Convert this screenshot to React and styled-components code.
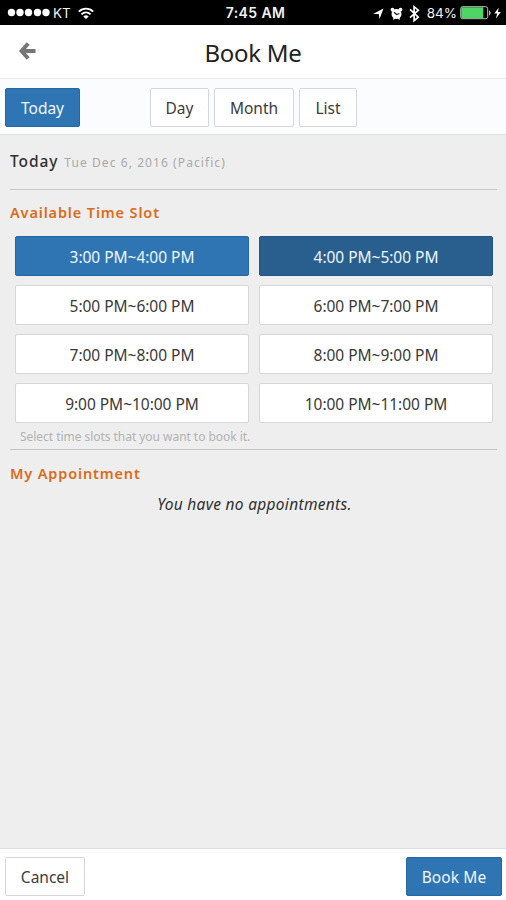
import React from "react";
import styled, { createGlobalStyle } from "styled-components";

const GlobalStyle = createGlobalStyle`
  * { box-sizing: border-box; }
  body { margin: 0; background: #eee; font-family: "Noto Sans", "Open Sans", sans-serif; }
  button { font-family: inherit; margin: 0; }
`;

const Screen = styled.div`
  width: 506px;
  height: 900px;
  display: flex;
  flex-direction: column;
  overflow: hidden;
  background: #eee;
  color: #333;
`;

const StatusBar = styled.div`
  height: 25px;
  flex: none;
  display: grid;
  grid-template-columns: 1fr auto 1fr;
  align-items: center;
  padding: 1px 4px 0 7px;
  background: #000;
  color: #f2f2f2;
  font: 500 13px/20px Inter, "Liberation Sans", sans-serif;
`;

const StatusGroup = styled.div`
  display: flex;
  align-items: center;
  justify-content: ${(p) => (p.$end ? "flex-end" : "flex-start")};
  svg { display: block; flex: none; }
`;

const Carrier = styled.span`
  margin: 0 7px 0 3px;
  font-size: 13.5px;
  font-weight: 400;
`;

const Clock = styled.span`
  font-size: 14px;
  font-weight: 600;
  letter-spacing: 0.4px;
  padding-left: 2px;
`;

const Percent = styled.span`
  margin: 0 3px 0 5px;
  font-size: 13.5px;
  font-weight: 400;
`;

const Header = styled.header`
  height: 54px;
  flex: none;
  display: grid;
  grid-template-columns: 60px 1fr 60px;
  align-items: center;
  background: #fff;
  border-bottom: 1px solid #e7e9ea;
`;

const BackButton = styled.button`
  border: 0;
  padding: 0 0 1px 18px;
  background: none;
  svg { display: block; }
`;

const Title = styled.h1`
  margin: 2px 0 0;
  text-align: center;
  font-size: 24px;
  line-height: 34px;
  font-weight: 400;
  letter-spacing: -0.3px;
  color: #222;
`;

const Toolbar = styled.nav`
  height: 56px;
  flex: none;
  display: grid;
  grid-template-columns: 145px auto 1fr;
  align-items: center;
  padding: 2px 5px 0;
  background: #fafcfe;
  border-bottom: 1px solid #dfe0e2;
`;

const ViewSwitch = styled.div`
  display: flex;
  gap: 5px;
`;

const Button = styled.button`
  width: ${(p) => p.$width}px;
  height: 39px;
  padding: 1px 0 0;
  border: 1px solid ${(p) => (p.$primary ? "#2468a2" : "#d5d6d9")};
  border-radius: 2px;
  background: ${(p) => (p.$primary ? "#2f75b3" : "#fff")};
  color: ${(p) => (p.$primary ? "#f1f7fb" : "#3c3c3c")};
  font-size: 15.5px;
  line-height: 24px;
  letter-spacing: ${(p) => p.$spacing || 0}px;
`;

const Content = styled.main`
  flex: 1;
  padding: 0 9px 0 10px;
`;

const DateRow = styled.div`
  height: 55px;
  display: flex;
  align-items: baseline;
  padding-top: 14px;
  border-bottom: 1px solid #c9c9c9;
  line-height: 24px;
`;

const DayName = styled.span`
  font-size: 15.5px;
  font-weight: 500;
  letter-spacing: 0.9px;
  color: #303030;
`;

const FullDate = styled.span`
  margin-left: 6px;
  font-size: 12px;
  letter-spacing: 1.08px;
  color: #a9a9a9;
`;

const SectionTitle = styled.h2`
  margin: 0;
  padding-top: ${(p) => p.$top}px;
  font-size: 14.5px;
  line-height: 22px;
  font-weight: 600;
  letter-spacing: ${(p) => p.$spacing}px;
  color: #dc6b18;
`;

const SlotGrid = styled.div`
  display: grid;
  grid-template-columns: 1fr 1fr;
  gap: 9px 10px;
  margin: 13px 4px 0 5px;
`;

const tones = {
  primary: ["#2f75b3", "#2468a2", "#eff6fb"],
  active: ["#285f8f", "#205484", "#eff6fb"],
  plain: ["#fff", "#d7d7d7", "#393939"],
};

const Slot = styled.button`
  height: 40px;
  padding: 1px 0 0;
  border: 1px solid ${(p) => tones[p.$tone][1]};
  border-radius: 2px;
  background: ${(p) => tones[p.$tone][0]};
  color: ${(p) => tones[p.$tone][2]};
  font-size: 15.5px;
  line-height: 24px;
  letter-spacing: -0.03px;
`;

const Hint = styled.p`
  height: 27px;
  margin: 0;
  padding: 4px 0 0 10px;
  border-bottom: 1px solid #c5c5c5;
  font-size: 12px;
  line-height: 20px;
  letter-spacing: -0.04px;
  color: #b2b2b2;
`;

const Empty = styled.p`
  margin: 8px 0 0;
  padding-left: 2px;
  text-align: center;
  font-size: 15.5px;
  line-height: 24px;
  font-style: italic;
  letter-spacing: 0.3px;
  color: #303030;
`;

const Footer = styled.footer`
  height: 52px;
  flex: none;
  display: flex;
  justify-content: space-between;
  align-items: flex-start;
  padding: 8px 4px 0 5px;
  background: #fff;
  border-top: 1px solid #dfdfdf;
`;

const SignalDots = () => (
  <svg width="43" height="12" viewBox="0 0 43 12" fill="#fff">
    {[4.5, 13, 21.5, 30.5, 39].map((x) => (
      <circle key={x} cx={x} cy="5.5" r="3.7" />
    ))}
  </svg>
);

const WifiIcon = () => (
  <svg width="16" height="13" viewBox="0 0 16 13" fill="none" stroke="#fff" strokeWidth="1.9">
    <path d="M.8 4.6C5 .6 11 .6 15.2 4.6M3.4 7.4c2.7-2.5 6.5-2.5 9.2 0" />
    <path d="M5.3 9.4c1.6-1.5 3.8-1.5 5.4 0L8 12z" fill="#fff" stroke="none" />
  </svg>
);

const StatusIcons = () => (
  <svg width="50" height="20" viewBox="0 0 50 20">
    <path d="M1 11 11.5 5.5 7.5 16 6.8 11z" fill="#fff" />
    <g fill="#fff">
      <circle cx="24.5" cy="11" r="5" />
      <circle cx="20.5" cy="6.7" r="1.9" />
      <circle cx="28.5" cy="6.7" r="1.9" />
      <path d="m20.7 16 2-2h3.6l2 2-1 .8-2.3-1.8h-1l-2.3 1.8z" />
    </g>
    <path d="m22 9.2 2.6 2.3 2.8-1" fill="none" stroke="#222" strokeWidth="1.2" />
    <path d="m38 6.3 8.3 7.8-4.2 3.6V3.7l4.2 3.5L38 14.6" fill="none" stroke="#fff" strokeWidth="1.7" />
  </svg>
);

const BatteryIcon = () => (
  <svg width="42" height="14" viewBox="0 0 42 14">
    <rect x=".7" y=".7" width="27" height="12" rx="2" fill="none" stroke="#b7c4b8" />
    <path d="M1.3 1.3h22v10.8h-22z" fill="#4fd466" />
    <path d="M29.2 4.5c1.8.6 1.8 4.4 0 5z" fill="#ddd" />
    <path d="m38.8 1.5-4.4 6h2.8l-1.3 5 5-6.4h-3z" fill="#fff" />
  </svg>
);

const ArrowIcon = () => (
  <svg width="18" height="20" viewBox="0 0 18 20" fill="none" stroke="#777" strokeWidth="4">
    <path d="M10.2 2.5 3.6 10l6.6 7.5M4 10H17.5" />
  </svg>
);

const slots = [
  ["3:00 PM~4:00 PM", "primary"],
  ["4:00 PM~5:00 PM", "active"],
  ["5:00 PM~6:00 PM", "plain"],
  ["6:00 PM~7:00 PM", "plain"],
  ["7:00 PM~8:00 PM", "plain"],
  ["8:00 PM~9:00 PM", "plain"],
  ["9:00 PM~10:00 PM", "plain"],
  ["10:00 PM~11:00 PM", "plain"],
];

export default function App() {
  return (
    <Screen>
      <GlobalStyle />
      <StatusBar>
        <StatusGroup>
          <SignalDots />
          <Carrier>KT</Carrier>
          <WifiIcon />
        </StatusGroup>
        <Clock>7:45 AM</Clock>
        <StatusGroup $end>
          <StatusIcons />
          <Percent>84%</Percent>
          <BatteryIcon />
        </StatusGroup>
      </StatusBar>
      <Header>
        <BackButton aria-label="Back"><ArrowIcon /></BackButton>
        <Title>Book Me</Title>
      </Header>
      <Toolbar>
        <Button $primary $width={75}>Today</Button>
        <ViewSwitch>
          <Button $width={59}>Day</Button>
          <Button $width={80}>Month</Button>
          <Button $width={58}>List</Button>
        </ViewSwitch>
      </Toolbar>
      <Content>
        <DateRow>
          <DayName>Today</DayName>
          <FullDate>Tue Dec 6, 2016 (Pacific)</FullDate>
        </DateRow>
        <SectionTitle $top={11} $spacing={0.85}>Available Time Slot</SectionTitle>
        <SlotGrid>
          {slots.map(([label, tone]) => (
            <Slot key={label} $tone={tone}>{label}</Slot>
          ))}
        </SlotGrid>
        <Hint>Select time slots that you want to book it.</Hint>
        <SectionTitle $top={12} $spacing={0.85}>My Appointment</SectionTitle>
        <Empty>You have no appointments.</Empty>
      </Content>
      <Footer>
        <Button $width={80}>Cancel</Button>
        <Button $primary $width={96} $spacing={0.1}>Book Me</Button>
      </Footer>
    </Screen>
  );
}
